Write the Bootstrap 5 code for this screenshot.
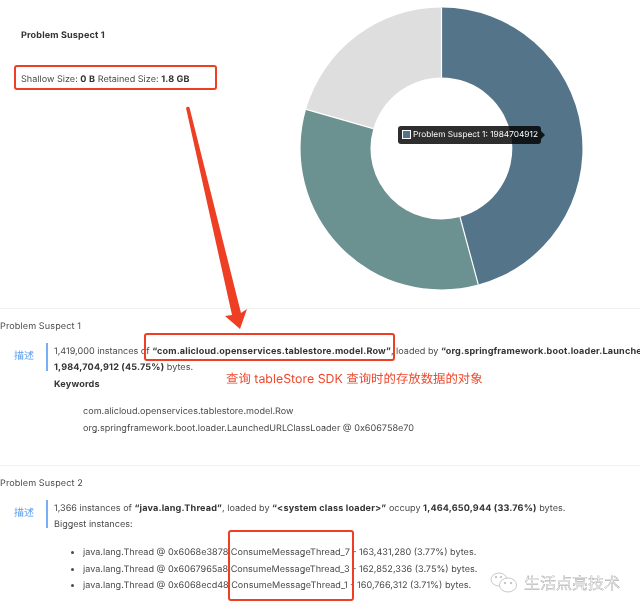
<!DOCTYPE html>
<html lang="en">
<head>
<meta charset="utf-8">
<title>Problem Suspects</title>
<link rel="stylesheet" href="https://cdn.jsdelivr.net/npm/bootstrap@5.3.0/dist/css/bootstrap.min.css">
<style>
html,body{background:#fff}
body{margin:0;font-family:Inter,"Liberation Sans","Noto Sans CJK SC",sans-serif;font-size:9.08px;line-height:16.5px;color:#4a4a4a;text-rendering:geometricPrecision}
b{color:#333;font-weight:700;letter-spacing:.17px}
.sheet{position:relative;width:640px;height:611px;overflow:hidden;filter:blur(.3px)}
.top-area{height:309px;border-bottom:1px solid #f0f0f0}
.top-text{padding:28px 0 0 21px;width:280px}
.top-title{margin-bottom:27px;color:#333;font-weight:700;letter-spacing:.13px}
.chart-box{position:relative;width:283px;height:283px;margin:7px 57px 0 0;flex:none}
.chart-box svg{display:block}
.chart-tip{position:absolute;left:98px;top:118.500px;width:143px;height:18px;background:rgba(0,0,0,.82);border-radius:3px;color:#fff;font-size:8.3px;line-height:18px;display:flex;align-items:center;gap:2px;padding-left:4px;white-space:nowrap}
.chart-tip::after{content:"";position:absolute;left:100%;top:5px;border:4px solid transparent;border-left-color:rgba(0,0,0,.82)}
.tip-swatch{width:9px;height:9px;background:#54748a;border:1px solid #fff;flex:none}
.suspect-block{height:157px;padding-top:10px;white-space:nowrap;border-bottom:1px solid #f0f0f0}
.suspect-block.last{border-bottom:0;height:auto}
.suspect-head{margin-bottom:7px;color:#4a4a4a;letter-spacing:.1px}
.desc-label{width:46px;padding:5px 0 0 14px;color:#5a9df0;font-size:10px;flex:none}
.desc-body{border-left:2px solid #79aef5;padding:1px 0 0 6px;height:28px;overflow:visible;box-sizing:border-box}
.sub-list{margin:11px 0 0;padding-left:29px;list-style:none}
.sub-list.dots{list-style:disc;margin-top:11.500px}
.long-line{width:586px;overflow:hidden}
.mark-box{position:absolute;border:2px solid #ee3e24;border-radius:3px}
.box-a{left:14px;top:65px;width:203px;height:25px}
.box-b{left:144px;top:333px;width:251px;height:28px}
.box-c{left:228px;top:530px;width:126px;height:71px}
.mark-arrow{position:absolute;left:0;top:0;pointer-events:none}
.mark-note{position:absolute;left:226px;top:370px;color:#ee4a2e;font-size:12.4px;line-height:18px;white-space:nowrap}
.stamp{position:absolute;left:490px;top:572px;display:flex;align-items:center;gap:6px}
.stamp-text{font-size:16px;line-height:22px;color:#f6f6f6;-webkit-text-stroke:.35px #999;white-space:nowrap}
</style>
</head>
<body>
<div class="sheet">
  <div class="top-area d-flex justify-content-between">
    <div class="top-text">
      <div class="top-title">Problem Suspect 1</div>
      <div>Shallow Size: <b>0 B</b> Retained Size: <b>1.8 GB</b></div>
    </div>
    <div class="chart-box">
      <svg width="283" height="283" viewBox="-141.5 -141.5 283 283">
        <path d="M0 -141A141 141 0 0 1 36.8 136.1L18.5 68.5A71 71 0 0 0 0 -71Z" fill="#54748a"/>
        <path d="M36.8 136.1A141 141 0 0 1 -135.4 -39.2L-68.2 -19.8A71 71 0 0 0 18.5 68.5Z" fill="#6b9191"/>
        <path d="M-135.4 -39.2A141 141 0 0 1 0 -141L0 -71A71 71 0 0 0 -68.2 -19.8Z" fill="#dedede"/>
        <path d="M0 -141V-71M36.8 136.1L18.5 68.5M-135.4 -39.2L-68.2 -19.8" stroke="#fff" stroke-width="1.2" fill="none"/>
      </svg>
      <div class="chart-tip"><span class="tip-swatch"></span><span>Problem Suspect 1: 1984704912</span></div>
    </div>
  </div>

  <section class="suspect-block">
    <div class="suspect-head">Problem Suspect 1</div>
    <div class="d-flex">
      <div class="desc-label">描述</div>
      <div class="desc-body">
        <div class="long-line">1,419,000 instances of <b>“com.alicloud.openservices.tablestore.model.Row”</b>, loaded by <b>“org.springframework.boot.loader.Launched</b></div>
        <div><b>1,984,704,912 (45.75%)</b> bytes.</div>
        <div><b>Keywords</b></div>
        <ul class="sub-list">
          <li>com.alicloud.openservices.tablestore.model.Row</li>
          <li>org.springframework.boot.loader.LaunchedURLClassLoader @ 0x606758e70</li>
        </ul>
      </div>
    </div>
  </section>

  <section class="suspect-block last">
    <div class="suspect-head">Problem Suspect 2</div>
    <div class="d-flex">
      <div class="desc-label">描述</div>
      <div class="desc-body">
        <div>1,366 instances of <b>“java.lang.Thread”</b>, loaded by <b>“&lt;system class loader&gt;”</b> occupy <b>1,464,650,944 (33.76%)</b> bytes.</div>
        <div>Biggest instances:</div>
        <ul class="sub-list dots">
          <li>java.lang.Thread @ 0x6068e3878 ConsumeMessageThread_7 - 163,431,280 (3.77%) bytes.</li>
          <li>java.lang.Thread @ 0x6067965a8 ConsumeMessageThread_3 - 162,852,336 (3.75%) bytes.</li>
          <li>java.lang.Thread @ 0x6068ecd48 ConsumeMessageThread_1 - 160,766,312 (3.71%) bytes.</li>
        </ul>
      </div>
    </div>
  </section>

  <div class="mark-box box-a"></div>
  <div class="mark-box box-b"></div>
  <div class="mark-box box-c"></div>
  <svg class="mark-arrow" width="640" height="611">
    <path d="M186 108Q187.500 106 189.500 107.500L241 313L247 309L240 329L225 316L232 315Z" fill="#ee3e24"/>
  </svg>
  <div class="mark-note">查询 tableStore SDK 查询时的存放数据的对象</div>
  <div class="stamp">
    <svg width="28" height="22" viewBox="0 0 28 22" fill="none" stroke="#bbb" stroke-width=".8">
      <ellipse cx="9" cy="7.500" rx="8" ry="6.500" fill="#fff"/>
      <ellipse cx="18" cy="13" rx="8.500" ry="7" fill="#fff"/>
      <circle cx="15" cy="11" r=".8" fill="#bbb"/><circle cx="21" cy="11" r=".8" fill="#bbb"/>
      <circle cx="6" cy="5" r=".8" fill="#bbb"/><circle cx="11" cy="5" r=".8" fill="#bbb"/>
    </svg>
    <span class="stamp-text">生活点亮技术</span>
  </div>
</div>
<script src="https://cdn.jsdelivr.net/npm/bootstrap@5.3.0/dist/js/bootstrap.bundle.min.js"></script>
</body>
</html>
